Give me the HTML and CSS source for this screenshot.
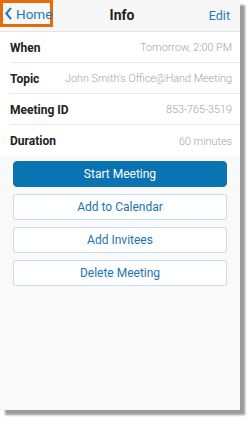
FILE: index.html
```html
<!DOCTYPE html>
<html>
<head>
<meta charset="utf-8">
<link rel="stylesheet" href="styles.css">
</head>
<body>
<div class="page">
<div class="screen">
  <div class="header">
    <div class="back">
      <svg class="chev" width="7" height="13" viewBox="0 0 7 13"><path d="M6 1 L1.3 6.5 L6 12" fill="none" stroke="#1a7bbf" stroke-width="2"/></svg>
      <span>Home</span>
    </div>
    <div class="title">Info</div>
    <div class="edit">Edit</div>
  </div>
  <div class="list">
    <div class="row"><span class="label">When</span><span class="value">Tomorrow, 2:00 PM</span></div>
    <div class="row"><span class="label">Topic</span><span class="value">John Smith's Office@Hand Meeting</span></div>
    <div class="row"><span class="label">Meeting ID</span><span class="value">853-765-3519</span></div>
    <div class="row last"><span class="label">Duration</span><span class="value">60 minutes</span></div>
  </div>
  <div class="actions">
    <div class="btn primary">Start Meeting</div>
    <div class="btn">Add to Calendar</div>
    <div class="btn">Add Invitees</div>
    <div class="btn">Delete Meeting</div>
  </div>
</div>
</div>
</body>
</html>
```
FILE: styles.css
```css
html, body { margin: 0; padding: 0; background: #fff; }
body { font-family: Roboto, "Liberation Sans", sans-serif; }
.page { width: 251px; height: 421px; }
.screen {
  width: 240px;
  height: 410px;
  background: #f9f9f9;
  box-shadow: 5px 5px 2px #9a9a9a;
  display: flex;
  flex-direction: column;
}
.header {
  height: 31px;
  background: #f7f7f7;
  border-bottom: 1px solid #e4e4e4;
  display: flex;
  align-items: flex-start;
  justify-content: space-between;
}
.back {
  box-sizing: border-box;
  width: 53px;
  height: 27px;
  border: 3px solid #e46c0a;
  display: flex;
  align-items: center;
  gap: 4px;
  padding-left: 2px;
  color: #1a7bbf;
  font-size: 13.5px;
}
.chev { flex: none; }
.title {
  font-weight: bold;
  font-size: 14px;
  color: #222;
  line-height: 31px;
  margin-left: 4px;
}
.edit {
  color: #1a7bbf;
  font-size: 12.5px;
  line-height: 31px;
  padding-right: 10px;
  width: 43px;
  text-align: right;
}
.list { background: #fff; }
.row {
  margin-left: 10px;
  padding-right: 8px;
  padding-top: 1px;
  box-sizing: border-box;
  border-bottom: 1px solid #e8e8e8;
  display: flex;
  align-items: center;
  justify-content: space-between;
  height: 31px;
}
.row.last { border-bottom: none; }
.label { font-weight: bold; font-size: 12px; color: #222; }
.value { font-size: 10.8px; font-weight: 300; color: #a4a4a4; }
.actions {
  padding: 5px 13px 0;
  display: flex;
  flex-direction: column;
  gap: 7px;
}
.btn {
  box-sizing: border-box;
  height: 26px;
  border: 1px solid #bfe0f0;
  border-radius: 3px;
  background: #fff;
  color: #1c74b4;
  font-size: 12px;
  display: flex;
  align-items: center;
  justify-content: center;
}
.btn.primary {
  background: #0a73b1;
  border-color: #0a73b1;
  color: #fff;
  border-radius: 4px;
}
```
